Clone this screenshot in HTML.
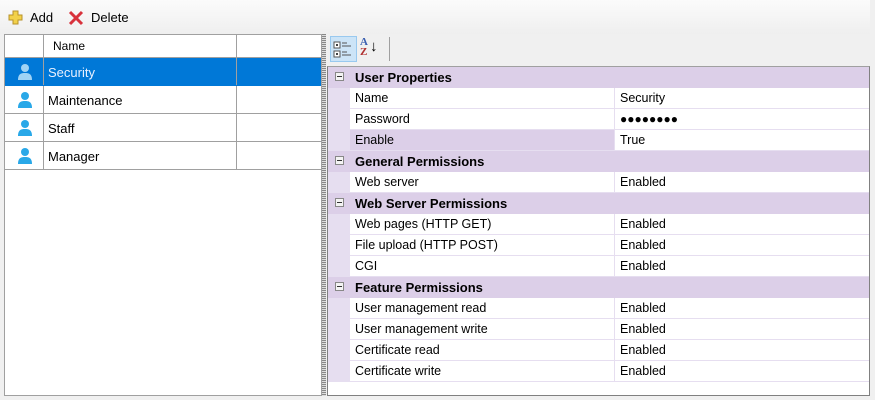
<!DOCTYPE html><html><head><style>
*{margin:0;padding:0;box-sizing:border-box}
body{width:875px;height:400px;background:#f0f0f0;font-family:"Liberation Sans",sans-serif;font-size:12px;color:#000;position:relative;overflow:hidden}
.a{position:absolute}
.tb{left:0;top:0;width:870px;height:34px;background:linear-gradient(#fbfbfb,#efefef)}
.lp{left:4px;top:34px;width:318px;height:362px;background:#fff;border:1px solid #a0a0a0}
.row{position:absolute;left:0;width:316px;height:28px;border-bottom:1px solid #a0a0a0}
.c1{position:absolute;left:38px;top:0;bottom:0;border-left:1px solid #a0a0a0}
.c2{position:absolute;left:231px;top:0;bottom:0;border-left:1px solid #a0a0a0}
.rt{position:absolute;left:43px;top:7px;font-size:13px}
.split{left:322px;top:34px;width:4px;height:362px;background:repeating-linear-gradient(#888 0 1px,#ddd 1px 2px)}
.pg{left:327px;top:66px;width:543px;height:330px;background:#fff;border:1px solid #808080;border-top:1px solid #a0a0a0}
.pr{position:absolute;left:0;width:541px;height:21px}
.cat{background:#dccfe8;font-weight:bold;font-size:13px}
.cat span{position:absolute;left:27px;top:3px}
.cat i{position:absolute;left:7px;top:5px;width:9px;height:9px;border:1px solid #888;background:#f4f4f4}
.cat i:after{content:"";position:absolute;left:1px;top:3px;width:5px;height:1px;background:#333}
.it{background:#e6def0}
.it .n{position:absolute;left:22px;top:0;width:264px;height:20px;background:#fff;padding:3px 5px;font-size:12.5px}
.it .v{position:absolute;left:287px;top:0;width:254px;height:20px;background:#fff;padding:3px 5px;font-size:12.5px}
</style></head><body>
<div class="a tb"></div>
<div class="a" style="left:8px;top:10px;width:16px;height:16px">
<svg width="16" height="16"><path d="M5 1h5v4h4v5h-4v4H5v-4H1V5h4z" fill="#f2d14a" stroke="#b8922a"/></svg></div>
<div class="a" style="left:30px;top:10px;font-size:13px">Add</div>
<div class="a" style="left:67px;top:9px"><svg width="18" height="18"><path d="M3 3L15 15M15 3L3 15" stroke="#d8323c" stroke-width="3"/></svg></div>
<div class="a" style="left:91px;top:10px;font-size:13px">Delete</div>

<div class="a lp">
<div class="row" style="top:0;height:23px"><div class="c1"></div><div class="c2"></div><span style="position:absolute;left:48px;top:4px;font-size:12px">Name</span></div>
<div class="row" style="top:23px;background:#0078d7;color:#fff;border-bottom:1px solid #0078d7"><div class="c1"></div><div class="c2"></div><span class="rt" style="color:#e8f0ff">Security</span>
<svg class="a" style="left:12px;top:5px" width="16" height="18"><circle cx="8" cy="5" r="4" fill="#9fd3f5"/><path d="M1 17c0-6 3-7 7-7s7 1 7 7z" fill="#9fd3f5"/></svg></div>
<div class="row" style="top:51px"><div class="c1"></div><div class="c2"></div><span class="rt">Maintenance</span>
<svg class="a" style="left:12px;top:5px" width="16" height="18"><circle cx="8" cy="5" r="4" fill="#29a8e8"/><path d="M1 17c0-6 3-7 7-7s7 1 7 7z" fill="#29a8e8"/></svg></div>
<div class="row" style="top:79px"><div class="c1"></div><div class="c2"></div><span class="rt">Staff</span>
<svg class="a" style="left:12px;top:5px" width="16" height="18"><circle cx="8" cy="5" r="4" fill="#29a8e8"/><path d="M1 17c0-6 3-7 7-7s7 1 7 7z" fill="#29a8e8"/></svg></div>
<div class="row" style="top:107px"><div class="c1"></div><div class="c2"></div><span class="rt">Manager</span>
<svg class="a" style="left:12px;top:5px" width="16" height="18"><circle cx="8" cy="5" r="4" fill="#29a8e8"/><path d="M1 17c0-6 3-7 7-7s7 1 7 7z" fill="#29a8e8"/></svg></div>
</div>
<div class="a split"></div>

<div class="a" style="left:330px;top:36px;width:27px;height:26px;background:#cce4f7;border:1px solid #99c9ef"></div>
<svg class="a" style="left:333px;top:40px" width="22" height="20"><rect x="1" y="2" width="6" height="6" fill="#fff" stroke="#555"/><rect x="1" y="11" width="6" height="6" fill="#fff" stroke="#555"/><path d="M3 5h2M4 4v2M3 14h2M4 13v2" stroke="#000"/><path d="M9 3h5M9 6h9M9 12h5M9 15h9" stroke="#555"/></svg>
<div class="a" style="left:360px;top:37px;font:bold 11px 'Liberation Serif',serif;color:#3a5fb0;line-height:10px">A<br><span style="color:#b03030">Z</span></div>
<div class="a" style="left:370px;top:38px;font-size:15px">↓</div>
<div class="a" style="left:389px;top:37px;width:1px;height:24px;background:#a0a0a0"></div>

<div class="a pg">
<div class="pr cat" style="top:0"><i></i><span>User Properties</span></div>
<div class="pr it" style="top:21px"><div class="n">Name</div><div class="v">Security</div></div>
<div class="pr it" style="top:42px"><div class="n">Password</div><div class="v" style="font-size:12px;padding-top:3px;letter-spacing:0">●●●●●●●●</div></div>
<div class="pr it" style="top:63px"><div class="n" style="background:#dccfe8">Enable</div><div class="v">True</div></div>
<div class="pr cat" style="top:84px"><i></i><span>General Permissions</span></div>
<div class="pr it" style="top:105px"><div class="n">Web server</div><div class="v">Enabled</div></div>
<div class="pr cat" style="top:126px"><i></i><span>Web Server Permissions</span></div>
<div class="pr it" style="top:147px"><div class="n">Web pages (HTTP GET)</div><div class="v">Enabled</div></div>
<div class="pr it" style="top:168px"><div class="n">File upload (HTTP POST)</div><div class="v">Enabled</div></div>
<div class="pr it" style="top:189px"><div class="n">CGI</div><div class="v">Enabled</div></div>
<div class="pr cat" style="top:210px"><i></i><span>Feature Permissions</span></div>
<div class="pr it" style="top:231px"><div class="n">User management read</div><div class="v">Enabled</div></div>
<div class="pr it" style="top:252px"><div class="n">User management write</div><div class="v">Enabled</div></div>
<div class="pr it" style="top:273px"><div class="n">Certificate read</div><div class="v">Enabled</div></div>
<div class="pr it" style="top:294px"><div class="n">Certificate write</div><div class="v">Enabled</div></div>
</div>
</body></html>
